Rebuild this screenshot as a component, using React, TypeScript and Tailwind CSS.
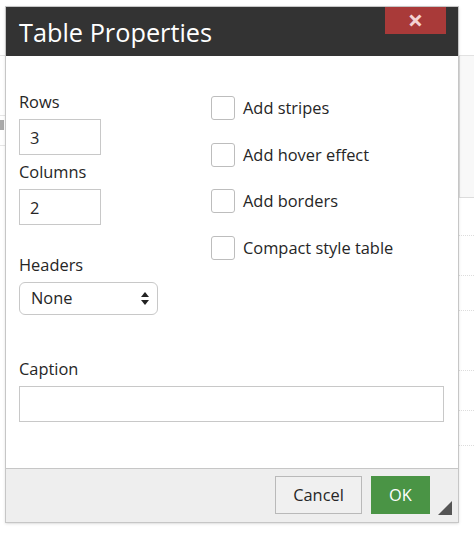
import { useState } from "react";

const checks = ["Add stripes", "Add hover effect", "Add borders", "Compact style table"];

const App = () => {
  const [rows, setRows] = useState("3");
  const [cols, setCols] = useState("2");

  return (
    <div
      className="relative w-[474px] h-[539px] bg-white overflow-hidden text-[#262626]"
      style={{ fontFamily: '"Open Sans", "Liberation Sans", sans-serif' }}
    >
      {/* page behind the dialog */}
      <div className="absolute left-0 top-[55px] w-full border-t border-[#e2e2e2]" />
      <div className="absolute left-[459px] top-[56px] w-[15px] h-[142px] bg-[#f8f8f8] border-l border-[#dcdcdc] border-b" />
      <div className="absolute left-0 top-[120px] w-[4px] h-[10px] bg-[#aaa]" />
      <div className="absolute left-0 top-[115px] w-[5px] border-t border-[#e6e6e6]" />
      <div className="absolute left-0 top-[145px] w-[5px] border-t border-[#e6e6e6]" />
      <div className="absolute left-[459px] top-[235px] w-[15px] border-t border-dotted border-[#ddd]" />
      <div className="absolute left-[459px] top-[275px] w-[15px] border-t border-dotted border-[#ddd]" />
      <div className="absolute left-[459px] top-[310px] w-[15px] border-t border-dotted border-[#ddd]" />
      <div className="absolute left-[459px] top-[370px] w-[15px] border-t border-dotted border-[#ddd]" />
      <div className="absolute left-[459px] top-[410px] w-[15px] border-t border-dotted border-[#ddd]" />
      <div className="absolute left-[459px] top-[445px] w-[15px] border-t border-dotted border-[#ddd]" />

      <div className="relative ml-[5px] mt-[6px] w-[454px] border border-[#c6c6c6] bg-white shadow-sm">
        <div className="flex justify-between h-[49px] bg-[#333]">
          <div className="pl-[13px] pt-[9px] text-[25.3px] leading-[32px] text-white">Table Properties</div>
          <button className="mr-[12px] w-[61px] h-[27px] bg-[#a93a39] flex items-center justify-center text-[#f3d2d2] text-[27px] leading-none font-bold pb-[2px]">
            ×
          </button>
        </div>

        <div className="px-[13px] pt-[34px] pb-[46px] text-[16.4px]">
          <div className="flex">
            <div className="w-[192px] flex flex-col">
              <label className="leading-[24px]">Rows</label>
              <input
                value={rows}
                onChange={(e) => setRows(e.target.value)}
                className="mt-[5px] w-[82px] h-[36px] border border-[#c8c8c8] px-[10px] outline-none"
              />
              <label className="mt-[5px] leading-[24px]">Columns</label>
              <input
                value={cols}
                onChange={(e) => setCols(e.target.value)}
                className="mt-[5px] w-[82px] h-[36px] border border-[#c8c8c8] px-[10px] outline-none"
              />
              <label className="mt-[28px] leading-[24px]">Headers</label>
              <div className="mt-[5px] w-[139px] h-[33px] border border-[#c8c8c8] rounded-[6px] flex items-center justify-between pl-[11px] pr-[8px]">
                <span>None</span>
                <svg width="8" height="13" viewBox="0 0 8 13">
                  <path d="M4 0 L8 5 L0 5 Z" fill="#222" />
                  <path d="M0 8 L8 8 L4 13 Z" fill="#222" />
                </svg>
              </div>
            </div>

            <div className="flex flex-col gap-[22.5px] pt-[6px]">
              {checks.map((c) => (
                <label key={c} className="flex items-center gap-[8px] leading-[24px]">
                  <span className="w-[24px] h-[24px] border border-[#bdbdbd] rounded-[3px] bg-white" />
                  {c}
                </label>
              ))}
            </div>
          </div>

          <label className="block mt-[42px] leading-[24px]">Caption</label>
          <input className="mt-[5px] w-[425px] h-[36px] border border-[#c8c8c8] px-[10px] outline-none" />
        </div>

        <div className="relative flex justify-end gap-[9px] h-[54px] pt-[7px] pr-[28px] bg-[#eee] border-t border-[#c6c6c6] text-[16.4px]">
          <button className="w-[87px] h-[38px] border border-[#b9b9b9] bg-[#f0f0f0] text-[#262626]">Cancel</button>
          <button className="w-[59px] h-[38px] bg-[#4a9445] text-white">OK</button>
          <svg className="absolute right-[6px] bottom-[7px]" width="14" height="14" viewBox="0 0 14 14">
            <path d="M14 0 L14 14 L0 14 Z" fill="#555" />
          </svg>
        </div>
      </div>
    </div>
  );
};

export default App;
